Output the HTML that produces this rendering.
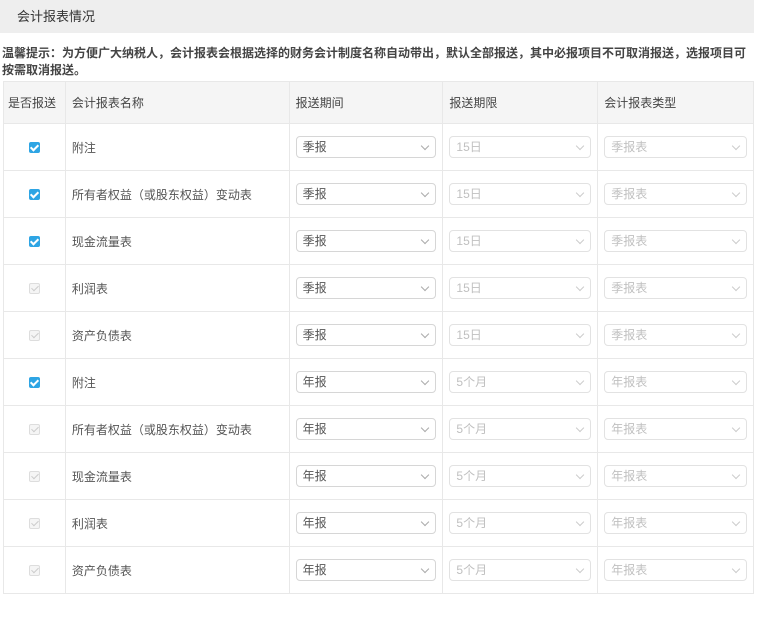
<!DOCTYPE html>
<html><head><meta charset="utf-8"><style>
*{margin:0;padding:0;box-sizing:border-box}
body{width:766px;height:624px;background:#fff;font-family:"Liberation Sans","Noto Sans CJK SC",sans-serif;font-size:12px;color:#333;position:relative;overflow:hidden}
.hd{position:absolute;left:0;top:0;width:754px;height:33px;background:#eee;font-size:13px;line-height:33px;padding-left:17px;color:#333}
.tip{position:absolute;left:2px;top:45px;width:752px;font-weight:bold;line-height:17px;font-size:12px;color:#444}
table{position:absolute;left:3px;top:81px;width:751px;border-collapse:collapse;border:1px solid #e4e4e4}
td,th{border:1px solid #e8e8e8;height:47px;text-align:left;padding-left:6px;font-weight:normal;color:#555}
th{height:42px;background:#f5f5f5;color:#444}
th:first-child{padding-left:4px}
td:first-child{text-align:center;padding:0}
.sel{position:relative;height:22px;border:1px solid #d6d6d6;border-radius:4px;line-height:20px;padding-left:6px;color:#555}
.sel.d{border-color:#e2e2e2;color:#c0c0c0}
.sel:after{content:"";position:absolute;right:7px;top:6px;width:5px;height:5px;border-right:1px solid #aaa;border-bottom:1px solid #aaa;transform:rotate(45deg)}
.sel.d:after{border-color:#ccc}
td.c{padding:0 6px}
.cb{display:inline-block;width:11px;height:11px;border-radius:2px;background:#2ea5e4;position:relative;vertical-align:middle}
.cb:after{content:"";position:absolute;left:3px;top:1px;width:3px;height:6px;border-right:2px solid #fff;border-bottom:2px solid #fff;transform:rotate(45deg)}
.cb.g{background:#f5f5f5;border:1px solid #ddd}
.cb.g:after{left:3px;top:0px;border-color:#ccc;border-width:1px}
</style></head><body>
<div class="hd">会计报表情况</div>
<div class="tip">温馨提示：为方便广大纳税人，会计报表会根据选择的财务会计制度名称自动带出，默认全部报送，其中必报项目不可取消报送，选报项目可按需取消报送。</div>
<table>
<colgroup><col style="width:62px"><col style="width:224px"><col style="width:154px"><col style="width:155px"><col style="width:156px"></colgroup>
<tr><th>是否报送</th><th>会计报表名称</th><th>报送期间</th><th>报送期限</th><th>会计报表类型</th></tr>
<tr><td><span class="cb"></span></td><td>附注</td><td class="c"><div class="sel">季报</div></td><td class="c"><div class="sel d">15日</div></td><td class="c"><div class="sel d">季报表</div></td></tr>
<tr><td><span class="cb"></span></td><td>所有者权益（或股东权益）变动表</td><td class="c"><div class="sel">季报</div></td><td class="c"><div class="sel d">15日</div></td><td class="c"><div class="sel d">季报表</div></td></tr>
<tr><td><span class="cb"></span></td><td>现金流量表</td><td class="c"><div class="sel">季报</div></td><td class="c"><div class="sel d">15日</div></td><td class="c"><div class="sel d">季报表</div></td></tr>
<tr><td><span class="cb g"></span></td><td>利润表</td><td class="c"><div class="sel">季报</div></td><td class="c"><div class="sel d">15日</div></td><td class="c"><div class="sel d">季报表</div></td></tr>
<tr><td><span class="cb g"></span></td><td>资产负债表</td><td class="c"><div class="sel">季报</div></td><td class="c"><div class="sel d">15日</div></td><td class="c"><div class="sel d">季报表</div></td></tr>
<tr><td><span class="cb"></span></td><td>附注</td><td class="c"><div class="sel">年报</div></td><td class="c"><div class="sel d">5个月</div></td><td class="c"><div class="sel d">年报表</div></td></tr>
<tr><td><span class="cb g"></span></td><td>所有者权益（或股东权益）变动表</td><td class="c"><div class="sel">年报</div></td><td class="c"><div class="sel d">5个月</div></td><td class="c"><div class="sel d">年报表</div></td></tr>
<tr><td><span class="cb g"></span></td><td>现金流量表</td><td class="c"><div class="sel">年报</div></td><td class="c"><div class="sel d">5个月</div></td><td class="c"><div class="sel d">年报表</div></td></tr>
<tr><td><span class="cb g"></span></td><td>利润表</td><td class="c"><div class="sel">年报</div></td><td class="c"><div class="sel d">5个月</div></td><td class="c"><div class="sel d">年报表</div></td></tr>
<tr><td><span class="cb g"></span></td><td>资产负债表</td><td class="c"><div class="sel">年报</div></td><td class="c"><div class="sel d">5个月</div></td><td class="c"><div class="sel d">年报表</div></td></tr>
</table>
</body></html>
